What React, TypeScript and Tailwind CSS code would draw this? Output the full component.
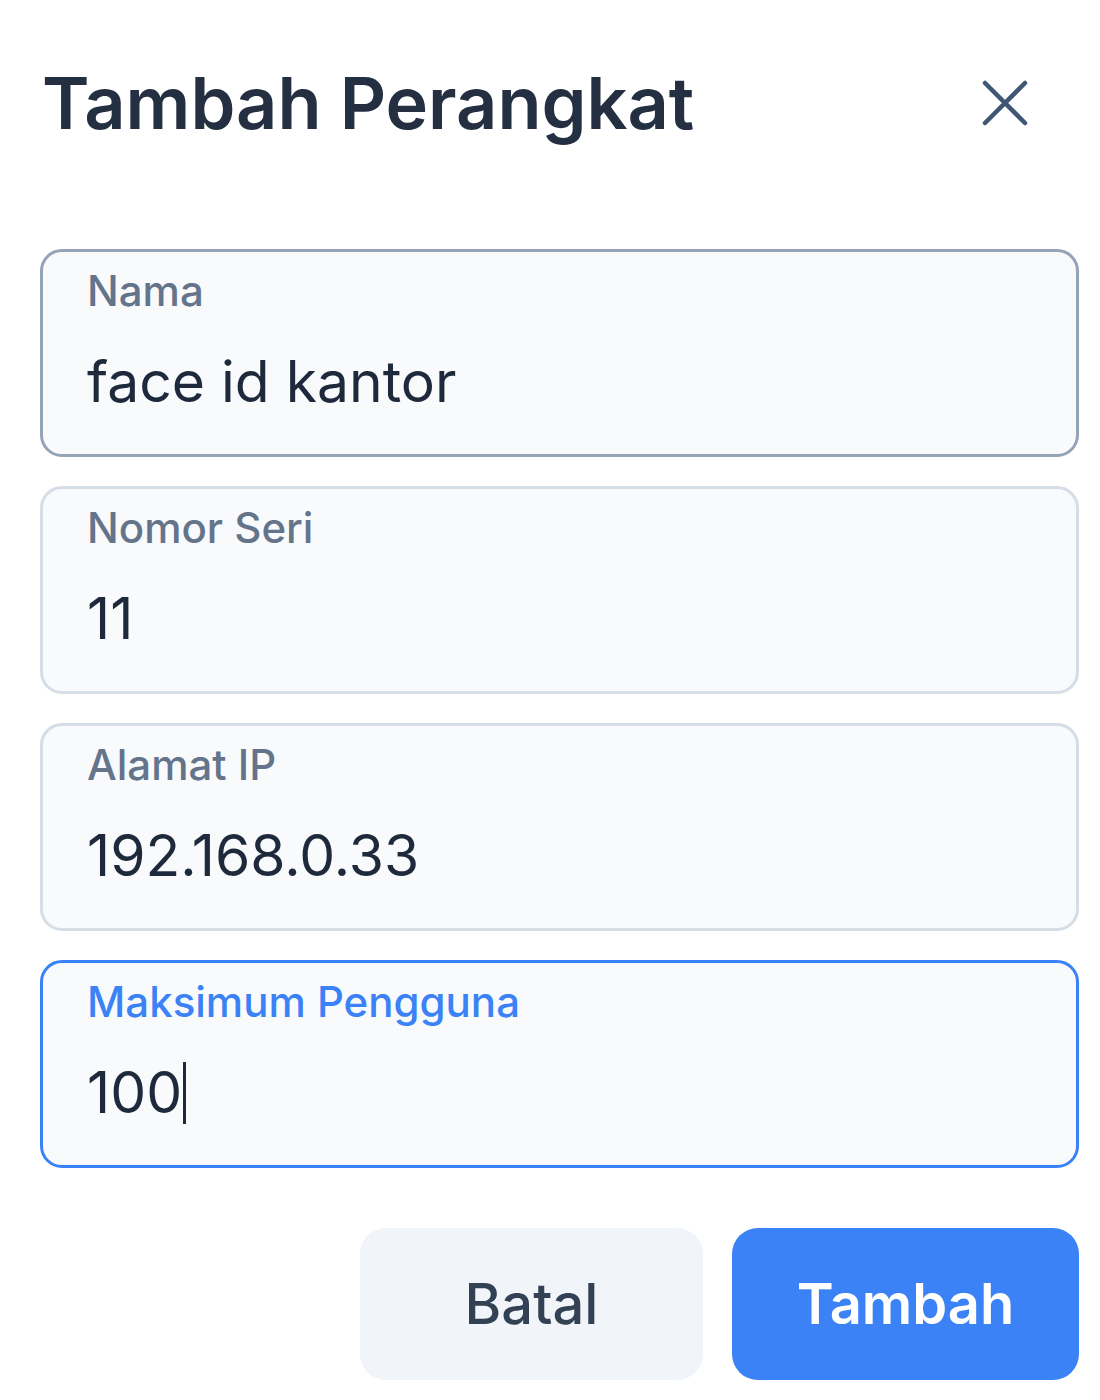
import React from "react"

const fields = [
  { label: "Nama", value: "face id kantor", state: "hover" },
  { label: "Nomor Seri", value: "11", state: "idle" },
  { label: "Alamat IP", value: "192.168.0.33", state: "idle" },
  { label: "Maksimum Pengguna", value: "100", state: "focus" },
]

function Field({ label, value, state }: { label: string; value: string; state: string }) {
  const border =
    state === "focus" ? "border-[#3b82f6]" : state === "hover" ? "border-[#94a3b8]" : "border-[#d5dde7]"
  return (
    <div className={`h-[208px] rounded-[22px] border-[3px] ${border} bg-[#f8fafc] px-[44px] pt-[14px]`}>
      <div
        className={`text-[42px] leading-[50px] font-medium ${state === "focus" ? "text-[#3b82f6]" : "text-[#64748b]"}`}
      >
        {label}
      </div>
      <div className="mt-[31px] flex items-center text-[57px] leading-[70px] text-[#1e293b]">
        <span>{value}</span>
        {state === "focus" && <span className="ml-[1px] inline-block h-[62px] w-[3px] bg-[#1e293b]" />}
      </div>
    </div>
  )
}

export default function App() {
  return (
    <div className="min-h-[1400px] bg-white pl-[40px] pr-[21px] pt-[60px] font-['Inter',sans-serif]">
      <div className="flex items-center justify-between">
        <h2 className="pl-[2px] text-[72px] leading-[86px] font-semibold text-[#243042]">
          Tambah Perangkat
        </h2>
        <svg
          className="mr-[51px]"
          width="46"
          height="46"
          viewBox="0 0 46 46"
          fill="none"
          stroke="#3f5675"
          strokeWidth="4.5"
          strokeLinecap="round"
        >
          <path d="M3 3L43 43M43 3L3 43" />
        </svg>
      </div>

      <div className="mt-[103px] flex flex-col gap-[29px]">
        {fields.map((f) => (
          <Field key={f.label} {...f} />
        ))}
      </div>

      <div className="mt-[60px] flex justify-end gap-[29px]">
        <button className="h-[152px] w-[343px] rounded-[26px] bg-[#f1f5f9] text-[56px] font-medium text-[#334155]">
          Batal
        </button>
        <button className="h-[152px] w-[347px] rounded-[26px] bg-[#3b82f6] text-[56px] font-semibold text-white">
          Tambah
        </button>
      </div>
    </div>
  )
}
